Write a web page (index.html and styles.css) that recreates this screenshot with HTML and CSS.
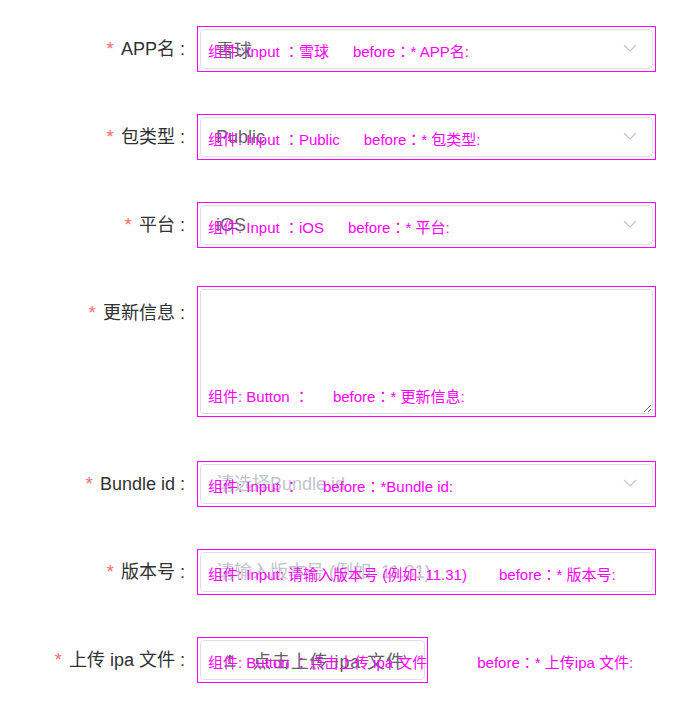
FILE: index.html
```html
<!DOCTYPE html>
<html lang="zh-CN">
<head>
<meta charset="utf-8">
<title>上传 ipa</title>
<link rel="stylesheet" href="styles.css">
</head>
<body>
<form class="form">
  <div class="item">
    <label class="label">APP名 :</label>
    <div class="probe">
      <div class="select">
        <input class="input" value="雪球" readonly>
        <span class="arrow"><svg width="14" height="8" viewBox="0 0 14 8"><polyline points="1,1 7,7 13,1" fill="none" stroke="#c0c4cc" stroke-width="1.2"/></svg></span>
      </div>
      <span class="tag">组件: Input <span class="fw" lang="zh-TW">：</span>雪球<span class="before">before<span class="fw" lang="zh-TW">：</span>* APP名:</span></span>
    </div>
  </div>

  <div class="item">
    <label class="label">包类型 :</label>
    <div class="probe">
      <div class="select">
        <input class="input" value="Public" readonly>
        <span class="arrow"><svg width="14" height="8" viewBox="0 0 14 8"><polyline points="1,1 7,7 13,1" fill="none" stroke="#c0c4cc" stroke-width="1.2"/></svg></span>
      </div>
      <span class="tag">组件: Input <span class="fw" lang="zh-TW">：</span>Public<span class="before">before<span class="fw" lang="zh-TW">：</span>* 包类型:</span></span>
    </div>
  </div>

  <div class="item">
    <label class="label">平台 :</label>
    <div class="probe">
      <div class="select">
        <input class="input" value="iOS" readonly>
        <span class="arrow"><svg width="14" height="8" viewBox="0 0 14 8"><polyline points="1,1 7,7 13,1" fill="none" stroke="#c0c4cc" stroke-width="1.2"/></svg></span>
      </div>
      <span class="tag">组件: Input <span class="fw" lang="zh-TW">：</span>iOS<span class="before">before<span class="fw" lang="zh-TW">：</span>* 平台:</span></span>
    </div>
  </div>

  <div class="item item-text">
    <label class="label">更新信息 :</label>
    <div class="probe probe-text">
      <textarea class="textarea"></textarea>
      <span class="tag">组件: Button <span class="fw" lang="zh-TW">：</span><span class="before">before<span class="fw" lang="zh-TW">：</span>* 更新信息:</span></span>
    </div>
  </div>

  <div class="item">
    <label class="label">Bundle id :</label>
    <div class="probe">
      <div class="select">
        <input class="input" placeholder="请选择Bundle id" readonly>
        <span class="arrow"><svg width="14" height="8" viewBox="0 0 14 8"><polyline points="1,1 7,7 13,1" fill="none" stroke="#c0c4cc" stroke-width="1.2"/></svg></span>
      </div>
      <span class="tag">组件: Input <span class="fw" lang="zh-TW">：</span><span class="before">before<span class="fw" lang="zh-TW">：</span>*Bundle id:</span></span>
    </div>
  </div>

  <div class="item">
    <label class="label">版本号 :</label>
    <div class="probe">
      <div class="select">
        <input class="input" placeholder="请输入版本号 (例如: 11.31)">
      </div>
      <span class="tag">组件: Input: 请输入版本号 (例如: 11.31)<span class="before before-mid">before<span class="fw" lang="zh-TW">：</span>* 版本号:</span></span>
    </div>
  </div>

  <div class="item">
    <label class="label">上传 ipa 文件 :</label>
    <div class="probe probe-btn">
      <button type="button" class="button">
        <svg class="upload-icon" width="14" height="14" viewBox="0 0 14 14"><path d="M7 11V2.5M3.5 6L7 2.5 10.5 6M1.5 13H12.5" fill="none" stroke="#606266" stroke-width="1.4"/></svg>
        <span class="btn-text">点击上传 ipa 文件</span>
      </button>
      <span class="tag">组件: Button <span class="fw" lang="zh-TW">：</span>点击上传 ipa 文件<span class="before before-wide">before<span class="fw" lang="zh-TW">：</span>* 上传ipa 文件:</span></span>
    </div>
  </div>
</form>
</body>
</html>
```
FILE: styles.css
```css
* { box-sizing: border-box; }

body {
  margin: 0;
  background: #fff;
  font-family: "Liberation Sans", "Noto Sans CJK SC", sans-serif;
}

.form {
  padding-top: 26px;
}

.item {
  display: flex;
  align-items: flex-start;
  margin-bottom: 42px;
}

.item-text {
  margin-bottom: 44px;
}

.label {
  flex: 0 0 197px;
  padding-right: 12px;
  text-align: right;
  font-size: 18px;
  line-height: 46px;
  color: #303133;
}

.label::before {
  content: "*";
  color: #f56c6c;
  font-size: 19px;
  margin-right: 7px;
}

.probe {
  position: relative;
  width: 459px;
  height: 46px;
  border: 1px solid #ff00ff;
  padding: 2px;
}

.probe-text {
  height: 131px;
  margin-top: -4px;
}

.probe-btn {
  width: 231px;
}

.select {
  position: relative;
  height: 40px;
}

.input {
  display: block;
  width: 100%;
  height: 40px;
  border: 1px solid #dcdfe6;
  border-radius: 4px;
  padding: 0 15px;
  font-family: inherit;
  font-size: 18px;
  color: #606266;
  background: #fff;
  outline: none;
}

.input::placeholder {
  color: #c0c4cc;
}

.arrow {
  position: absolute;
  right: 16px;
  top: 15px;
  display: flex;
}

.textarea {
  display: block;
  width: 100%;
  height: 125px;
  border: 1px solid #dcdfe6;
  border-bottom-color: #d4d6da;
  border-radius: 4px;
  padding: 5px 15px;
  font-family: inherit;
  font-size: 18px;
  color: #606266;
  resize: vertical;
  outline: none;
}

.button {
  display: flex;
  align-items: center;
  width: 225px;
  height: 40px;
  padding: 0 0 0 22px;
  border: 1px solid #dcdfe6;
  border-radius: 4px;
  background: #fff;
  font-family: inherit;
  font-size: 18px;
  color: #606266;
}

.upload-icon {
  flex: 0 0 14px;
}

.btn-text {
  margin-left: 16px;
  letter-spacing: 0.9px;
  white-space: nowrap;
}

.tag {
  position: absolute;
  left: 10px;
  bottom: 11px;
  font-size: 15px;
  line-height: 16px;
  color: #ff00ff;
  white-space: nowrap;
  pointer-events: none;
}

.fw {
  font-family: "Noto Sans CJK TC", sans-serif;
}

.before {
  margin-left: 24px;
}

.before-mid {
  margin-left: 32px;
}

.before-wide {
  margin-left: 50px;
}
```
